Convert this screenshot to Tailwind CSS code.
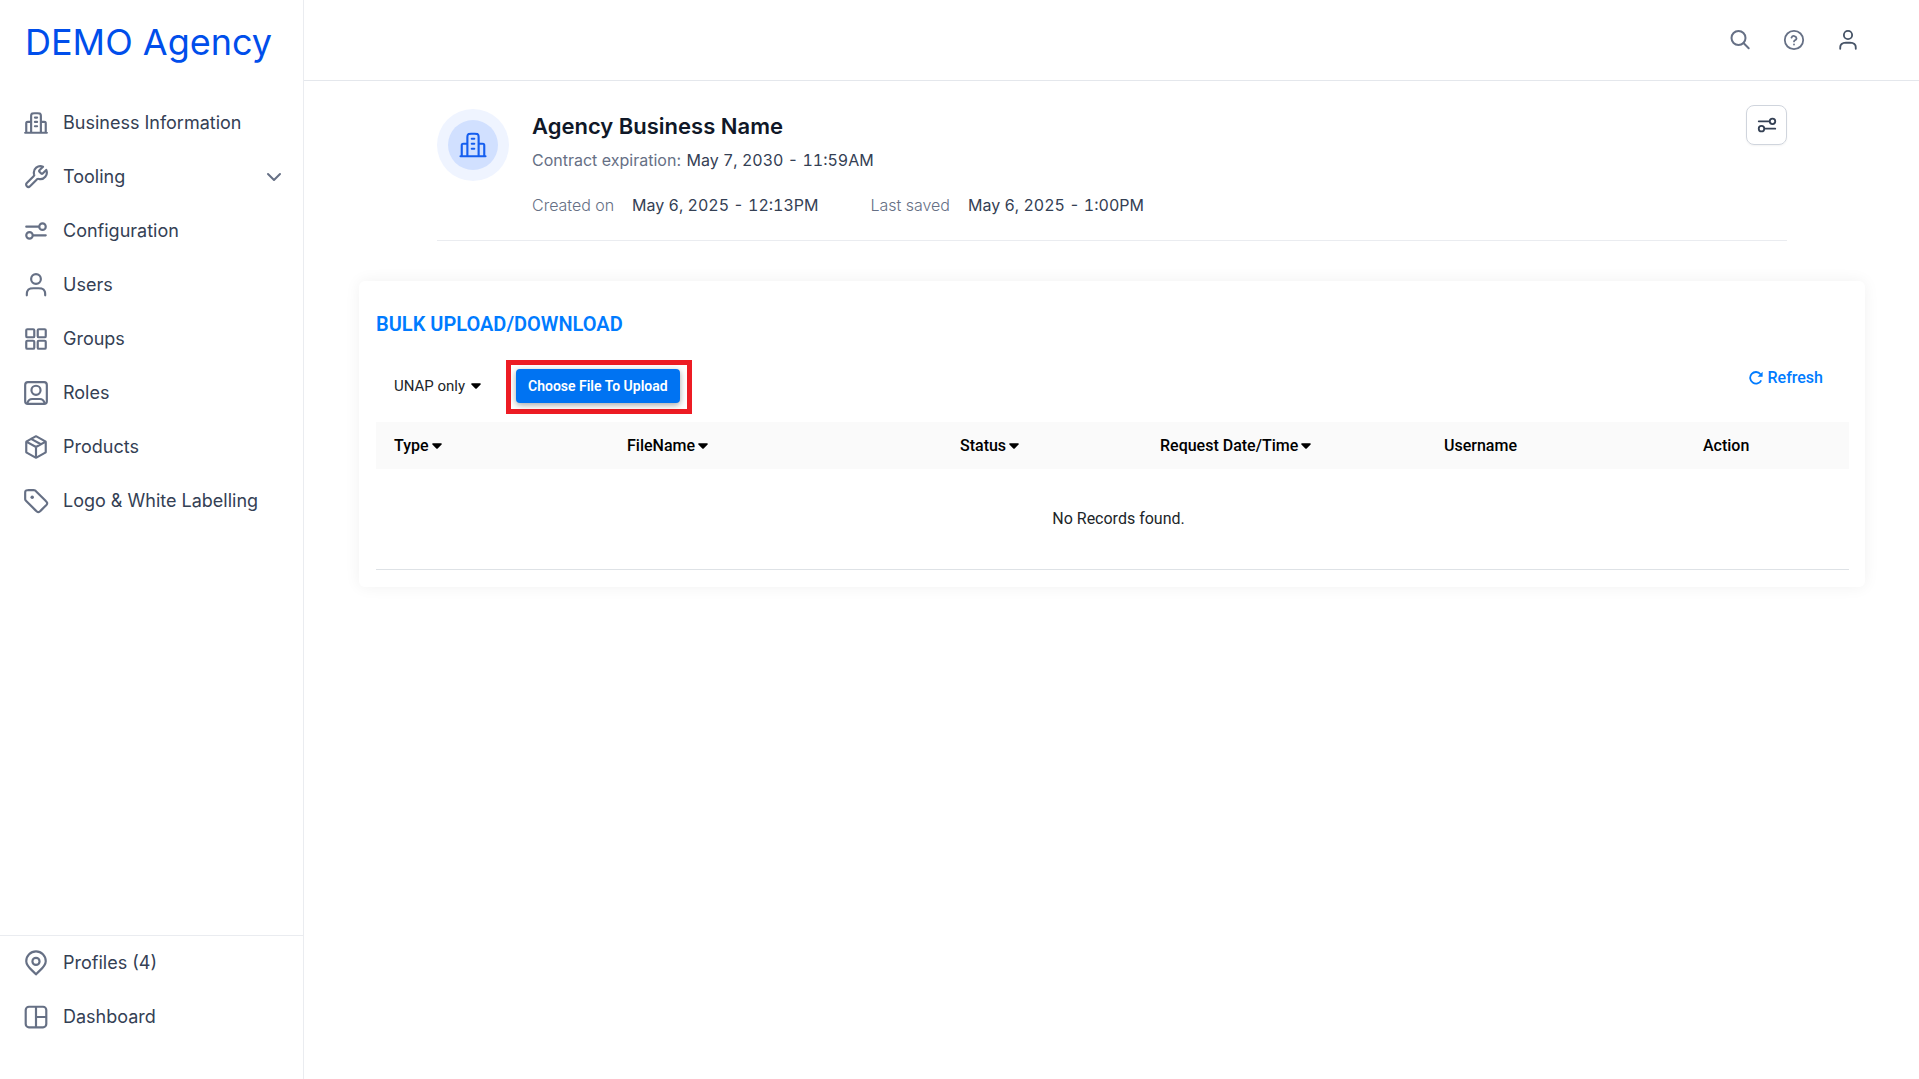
<!DOCTYPE html>
<html lang="en">
<head>
  <meta charset="UTF-8" />
  <meta name="viewport" content="width=device-width, initial-scale=1.0" />
  <title>DEMO Agency</title>
  <script src="https://cdn.jsdelivr.net/npm/@tailwindcss/browser@4"></script>
</head>
<body class="bg-white font-['Inter',sans-serif] text-[#344054]">
  <!-- icons used more than once -->
  <svg class="hidden">
    <symbol id="building" viewBox="0 0 24 24">
      <path d="M7.5 11H4.6c-.56 0-.84 0-1.054.109a1 1 0 0 0-.437.437C3 11.76 3 12.04 3 12.6V21m13.500-10h2.900c.56 0 .84 0 1.054.109a1 1 0 0 1 .437.437C21 11.76 21 12.04 21 12.6V21M16.500 21V6.200c0-1.120 0-1.680-.218-2.108a2 2 0 0 0-.874-.874C14.980 3 14.420 3 13.300 3h-2.600c-1.120 0-1.680 0-2.108.218a2 2 0 0 0-.874.874C7.500 4.520 7.500 5.080 7.500 6.200V21M22 21H2m9-14h2m-2 4h2m-2 4h2" />
    </symbol>
    <symbol id="sliders" viewBox="0 0 24 24">
      <path d="M3 8h12m0 0a3 3 0 1 0 6 0 3 3 0 0 0-6 0Zm-6 8h12M9 16a3 3 0 1 1-6 0 3 3 0 0 1 6 0Z" />
    </symbol>
    <symbol id="user" viewBox="0 0 24 24">
      <path d="M3.500 21.500c0-1.900.1-2.800.4-3.600a4.500 4.500 0 0 1 2.900-2.600c.7-.3 1.500-.3 3-.3h4.400c1.500 0 2.300 0 3 .3a4.500 4.500 0 0 1 2.900 2.600c.3.800.4 1.700.4 3.600M16.500 6.500a4.500 4.500 0 1 1-9 0 4.500 4.500 0 0 1 9 0Z" />
    </symbol>
    <symbol id="caret" viewBox="0 0 10 6">
      <path d="M1 .2h8c.8 0 1.100.8.600 1.300L5.700 5.400a1 1 0 0 1-1.400 0L.4 1.500C-.1 1 .2.2 1 .2Z" />
    </symbol>
  </svg>

  <div class="flex min-h-screen">
    <!-- Sidebar -->
    <aside class="flex w-76 shrink-0 flex-col border-r border-[#eaecf0]">
      <a href="#" class="mt-5 px-[25px] text-4xl leading-[44px] whitespace-nowrap text-[#004eeb]">DEMO Agency</a>
      <nav class="mt-8 text-lg leading-[26px]">
        <ul>
          <li><a href="#" class="flex items-center gap-3.5 px-[23px] py-3.5">
            <svg class="size-[26px] fill-none stroke-[#667085] stroke-2 [stroke-linecap:round] [stroke-linejoin:round]"><use href="#building" /></svg>
            Business Information</a></li>
          <li><a href="#" class="flex items-center gap-3.5 px-[23px] py-3.5">
            <svg viewBox="0 0 24 24" class="size-[26px] fill-none stroke-[#667085] stroke-2 [stroke-linecap:round] [stroke-linejoin:round]"><path d="M15.630 7.630c-.4-.4-.6-.6-.670-.820a1 1 0 0 1 0-.620c.070-.230.270-.430.670-.820l2.840-2.840A6 6 0 0 0 10.190 9.400c.130.480.190.720.180.870a.9.900 0 0 1-.110.400c-.070.140-.210.270-.480.540L3.500 17.500a2.120 2.120 0 0 0 3 3l6.290-6.290c.270-.270.400-.410.540-.480a.9.900 0 0 1 .4-.110c.150-.010.390.050.870.180a6 6 0 0 0 6.870-8.270l-2.840 2.840c-.390.400-.590.600-.820.670a1 1 0 0 1-.620 0c-.230-.070-.430-.270-.820-.670Z" /></svg>
            Tooling
            <svg viewBox="0 0 20 20" class="ml-auto mr-[-4px] size-5 fill-none stroke-[#667085] stroke-2 [stroke-linecap:round] [stroke-linejoin:round]"><path d="m4 7 6 6 6-6" /></svg></a></li>
          <li><a href="#" class="flex items-center gap-3.5 px-[23px] py-3.5">
            <svg class="size-[26px] fill-none stroke-[#667085] stroke-2 [stroke-linecap:round] [stroke-linejoin:round]"><use href="#sliders" /></svg>
            Configuration</a></li>
          <li><a href="#" class="flex items-center gap-3.5 px-[23px] py-3.5">
            <svg class="size-[26px] fill-none stroke-[#667085] stroke-2 [stroke-linecap:round] [stroke-linejoin:round]"><use href="#user" /></svg>
            Users</a></li>
          <li><a href="#" class="flex items-center gap-3.5 px-[23px] py-3.5">
            <svg viewBox="0 0 24 24" class="size-[26px] fill-none stroke-[#667085] stroke-2"><rect x="3" y="3" width="7.400" height="7.400" rx="1" /><rect x="13.600" y="3" width="7.400" height="7.400" rx="1" /><rect x="3" y="13.600" width="7.400" height="7.400" rx="1" /><rect x="13.600" y="13.600" width="7.400" height="7.400" rx="1" /></svg>
            Groups</a></li>
          <li><a href="#" class="flex items-center gap-3.5 px-[23px] py-3.5">
            <svg viewBox="0 0 24 24" class="size-[26px] fill-none stroke-[#667085] stroke-2 [stroke-linecap:round]"><rect x="2" y="2" width="20" height="20" rx="2.500" /><circle cx="12" cy="9.500" r="4.200" /><path d="M4 21.300c.8-2.600 2-3.800 4.500-3.800h7c2.500 0 3.700 1.200 4.500 3.800" /></svg>
            Roles</a></li>
          <li><a href="#" class="flex items-center gap-3.5 px-[23px] py-3.5">
            <svg viewBox="0 0 24 24" class="size-[26px] fill-none stroke-[#667085] stroke-2 [stroke-linecap:round] [stroke-linejoin:round]"><path d="M20.500 7.280 12 12m0 0L3.500 7.280M12 12v9.500M21 16.060V7.940c0-.34 0-.51-.05-.66a1 1 0 0 0-.21-.370c-.110-.120-.260-.200-.560-.370l-7.400-4.110c-.280-.160-.420-.240-.570-.270a1 1 0 0 0-.420 0c-.150.030-.290.110-.570.270l-7.400 4.110c-.300.170-.450.250-.560.370a1 1 0 0 0-.210.370C3 7.430 3 7.600 3 7.940v8.120c0 .34 0 .51.050.66a1 1 0 0 0 .210.370c.110.120.260.200.560.370l7.400 4.110c.280.160.420.240.570.270.140.030.280.030.420 0 .150-.030.290-.110.570-.270l7.400-4.110c.300-.170.450-.250.560-.370a1 1 0 0 0 .210-.370c.050-.150.050-.320.050-.66ZM16.500 9.500l-9-5" /></svg>
            Products</a></li>
          <li><a href="#" class="flex items-center gap-3.5 px-[23px] py-3.5">
            <svg viewBox="0 0 24 24" class="size-[26px] fill-none stroke-[#667085] stroke-2 [stroke-linecap:round] [stroke-linejoin:round]"><path d="M2 5.200v4.470c0 .49 0 .740.060.970a2 2 0 0 0 .240.580c.120.200.300.370.640.720l8.930 8.930c.800.790 1.190 1.190 1.650 1.340a2 2 0 0 0 1.230 0c.460-.150.850-.550 1.650-1.340l4.470-4.470c.790-.800 1.190-1.190 1.340-1.650a2 2 0 0 0 0-1.230c-.150-.460-.550-.850-1.340-1.650L11.940 2.940c-.350-.340-.520-.520-.720-.640a2 2 0 0 0-.580-.240C10.410 2 10.160 2 9.670 2H5.200c-1.120 0-1.680 0-2.110.220a2 2 0 0 0-.870.870C2 3.520 2 4.080 2 5.200Z" /><circle cx="8.500" cy="8.500" r="1.600" class="fill-[#667085] stroke-none" /></svg>
            Logo &amp; White Labelling</a></li>
        </ul>
      </nav>
      <ul class="mt-auto border-t border-[#eaecf0] pb-[35px] text-lg leading-[26px]">
        <li><a href="#" class="flex items-center gap-3.5 px-[23px] py-3.5">
          <svg viewBox="0 0 24 24" class="size-[26px] fill-none stroke-[#667085] stroke-2 [stroke-linecap:round] [stroke-linejoin:round]"><path d="M12 22.500c4-4.500 9-7.300 9-12.200a9 9 0 0 0-18 0c0 4.900 5 7.700 9 12.200Z" /><circle cx="12" cy="10.500" r="3.300" /></svg>
          Profiles (4)</a></li>
        <li><a href="#" class="flex items-center gap-3.5 px-[23px] py-3.5">
          <svg viewBox="0 0 24 24" class="size-[26px] fill-none stroke-[#667085] stroke-2"><rect x="2.500" y="2.500" width="19" height="19" rx="3" /><path d="M12 2.500v19m0-9.500h9.500" /></svg>
          Dashboard</a></li>
      </ul>
    </aside>

    <div class="flex min-w-0 grow flex-col">
      <!-- Top bar -->
      <header class="flex h-[81px] items-center justify-end gap-8 border-b border-[#e4e7ec] pr-15">
        <button aria-label="Search"><svg viewBox="0 0 22 22" class="size-[22px] fill-none stroke-[#667085] stroke-2 [stroke-linecap:round]"><circle cx="9.500" cy="9" r="7" /><path d="m14.500 14 5.200 5.200" /></svg></button>
        <button aria-label="Help"><svg viewBox="0 0 22 22" class="size-[22px] fill-none stroke-[#667085] stroke-[1.800] [stroke-linecap:round] [stroke-linejoin:round]"><circle cx="11" cy="11" r="9.200" /><path d="M8.500 8.600a2.600 2.600 0 0 1 5 .8c0 1.700-2.500 2-2.500 3M11 15.500h.01" /></svg></button>
        <button aria-label="Account"><svg class="size-[22px] fill-none stroke-[#475467] stroke-2 [stroke-linecap:round]"><use href="#user" /></svg></button>
      </header>

      <main class="pt-6 pr-[54px] pl-[55px]">
        <section class="mx-[78px] flex items-start border-b border-[#eaecf0] pb-[23px]">
          <div class="mt-1 flex size-18 shrink-0 items-center justify-center rounded-full bg-[#eff4ff]">
            <div class="flex size-[50px] items-center justify-center rounded-full bg-[#d1e0ff]">
              <svg class="size-[30px] fill-none stroke-[#155eef] stroke-[1.700] [stroke-linecap:round] [stroke-linejoin:round]"><use href="#building" /></svg>
            </div>
          </div>
          <div class="ml-[23px] grow text-base leading-6">
            <h1 class="mt-1 text-[22px] leading-[34px] font-semibold text-[#101828]">Agency Business Name</h1>
            <p class="mt-[5px] text-[#667085]">Contract expiration: <span class="ml-px text-[#344054] tabular-nums">May 7, 2030 - 11:59AM</span></p>
            <dl class="mt-[21px] flex tabular-nums">
              <dt class="mr-[18px] font-light text-[#667085]">Created on</dt>
              <dd class="mr-[52px]">May 6, 2025 - 12:13PM</dd>
              <dt class="mr-[18px] font-light text-[#667085]">Last saved</dt>
              <dd>May 6, 2025 - 1:00PM</dd>
            </dl>
          </div>
          <button aria-label="Settings" class="flex h-10 w-[41px] items-center justify-center rounded-lg border border-[#d0d5dd] shadow-xs">
            <svg class="size-[22px] fill-none stroke-[#344054] stroke-2 [stroke-linecap:round]"><use href="#sliders" /></svg>
          </button>
        </section>

        <!-- Bulk upload / download -->
        <section class="mt-10 rounded-md px-[17px] pt-[27px] pb-[17px] font-['Roboto',sans-serif] shadow-[0_0_16px_rgba(0,0,0,0.06)]">
          <h2 class="text-xl leading-8 font-semibold text-[#007bff] uppercase">Bulk Upload/Download</h2>
          <div class="mt-5 mb-2 flex items-center pl-[18px]">
            <label class="flex items-center gap-[5px] pb-0.5 text-[15px] text-[#212529]">
              <select aria-label="Upload type" class="appearance-none"><option>UNAP only</option></select>
              <svg class="h-1.5 w-2.5 fill-black"><use href="#caret" /></svg>
            </label>
            <div class="ml-[25px] border-5 border-[#ed1c24] pt-1 pr-[7px] pb-1.5 pl-[5px]">
              <button class="block h-[34px] rounded bg-[#0073f2] px-3 text-sm font-semibold text-white shadow-[0_2px_6px_rgba(0,0,0,0.35)]">Choose File To Upload</button>
            </div>
            <a href="#" class="mr-[25px] mb-[18px] ml-auto flex items-center gap-[5px] text-base font-medium text-[#007bff]">
              <svg viewBox="0 0 14 14" class="size-3.5 fill-none stroke-[#007bff] stroke-[1.800]"><path d="M12.200 9.300A5.800 5.800 0 1 1 11.500 3.200" /><path d="M13.600.8v5H8.600Z" class="fill-[#007bff] stroke-none" /></svg>
              Refresh</a>
          </div>
          <table class="w-full table-fixed border-b border-[#dee2e6] text-base">
            <colgroup>
              <col class="w-[233px]" /><col class="w-[333px]" /><col class="w-[200px]" /><col class="w-[284px]" /><col class="w-[259px]" /><col class="w-[164px]" />
            </colgroup>
            <thead class="bg-[#fafafa] text-left text-black">
              <tr class="h-[47px]">
                <th class="pl-[18px] font-medium"><button class="flex items-center gap-[3px]">Type <svg class="h-1.5 w-2.5 fill-black"><use href="#caret" /></svg></button></th>
                <th class="pl-[18px] font-medium"><button class="flex items-center gap-[3px]">FileName <svg class="h-1.5 w-2.5 fill-black"><use href="#caret" /></svg></button></th>
                <th class="pl-[18px] font-medium"><button class="flex items-center gap-[3px]">Status <svg class="h-1.5 w-2.5 fill-black"><use href="#caret" /></svg></button></th>
                <th class="pl-[18px] font-medium"><button class="flex items-center gap-[3px]">Request Date/Time <svg class="h-1.5 w-2.5 fill-black"><use href="#caret" /></svg></button></th>
                <th class="pl-[18px] font-medium">Username</th>
                <th class="pl-[18px] font-medium">Action</th>
              </tr>
            </thead>
            <tbody>
              <tr class="h-[100px]"><td colspan="6" class="pl-3 text-center text-[#212529]">No Records found.</td></tr>
            </tbody>
          </table>
        </section>
      </main>
    </div>
  </div>
</body>
</html>
